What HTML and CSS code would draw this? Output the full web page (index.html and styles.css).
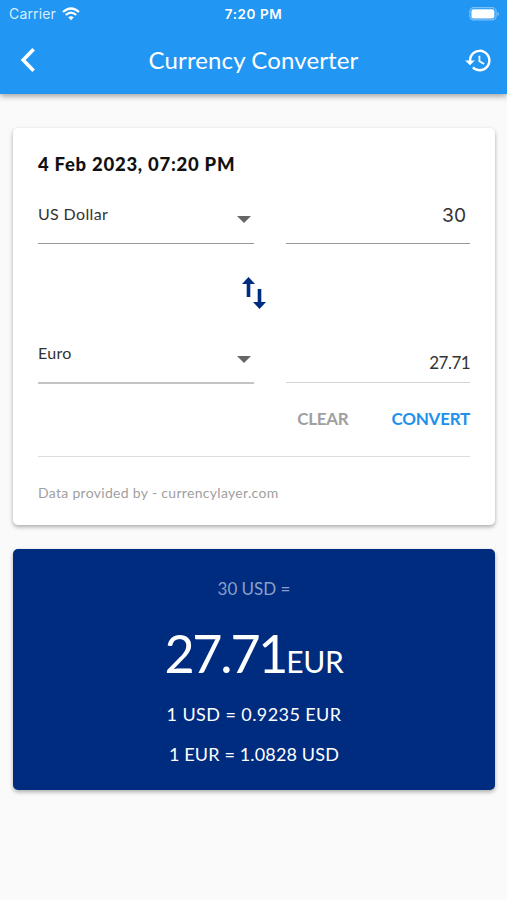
FILE: index.html
```html
<!DOCTYPE html>
<html lang="en">
<head>
<meta charset="utf-8">
<title>Currency Converter</title>
<link rel="stylesheet" href="styles.css">
</head>
<body>
<header class="header">
  <div class="status">
    <div class="carrier"><span>Carrier</span>
      <svg width="18" height="14" viewBox="0 0 18 14" fill="none" stroke="#fff" stroke-width="2.3"><path d="M1 5Q9-2 17 5M3.8 8Q9 3.2 14.2 8"/><path d="M6.2 10.3Q9 8.2 11.8 10.3L9 13.2Z" fill="#fff" stroke="none"/></svg>
    </div>
    <div class="clock">7:20 PM</div>
    <svg class="battery" width="31" height="14" viewBox="0 0 31 14"><rect x=".9" y=".7" width="26.2" height="12.2" rx="3.8" fill="none" stroke="#7dc1f9" stroke-width="1.2"/><rect x="2.4" y="2.2" width="23" height="9.2" rx="2.2" fill="#fff"/><path d="M28.5 5v4q1.6-.6 1.6-2t-1.6-2Z" fill="#7dc1f9"/></svg>
  </div>
  <div class="bar">
    <svg width="16" height="26" viewBox="0 0 16 26" fill="none" stroke="#fff" stroke-width="3.6"><path d="M13.6 2.2 3.2 13 13.6 23.8"/></svg>
    <h1 class="title">Currency Converter</h1>
    <svg width="29" height="29" viewBox="0 0 24 24" fill="#fff"><path d="M13 3a9 9 0 0 0-9 9H1l3.89 3.89.07.14L9 12H6a7 7 0 1 1 2.06 4.94l-1.42 1.42A9 9 0 1 0 13 3Zm-1 5v5l4.28 2.54.72-1.21-3.5-2.08V8H12Z"/></svg>
  </div>
</header>
<main class="content">
  <section class="card form">
    <h2 class="date">4 Feb 2023, 07:20 PM</h2>
    <div class="fields">
      <div class="select dark"><span class="dollar">US Dollar</span><i class="caret"></i></div>
      <div class="amount dark">30</div>
    </div>
    <div class="swap">
      <svg width="26" height="34" viewBox="0 0 26 34" fill="#002c80"><path d="M7.5 1 14 8H9.3V21H5.7V8H1ZM16.7 13h3.6V26H25L18.5 33 12 26h4.7Z"/></svg>
    </div>
    <div class="fields second">
      <div class="select"><span class="euro">Euro</span><i class="caret"></i></div>
      <div class="amount converted">27.71</div>
    </div>
    <div class="actions"><span class="clear">CLEAR</span><span class="convert">CONVERT</span></div>
    <p class="source">Data provided by - currencylayer.com</p>
  </section>
  <section class="card result">
    <p class="query">30 USD =</p>
    <p class="total"><span class="value">27.71</span><span class="unit">EUR</span></p>
    <p class="rate">1 USD = 0.9235 EUR</p>
    <p class="rate inverse">1 EUR = 1.0828 USD</p>
  </section>
</main>
</body>
</html>
```
FILE: styles.css
```css
* { box-sizing: border-box; }
body { margin: 0; min-height: 900px; background: #fafafa; color: #333; font-family: Lato, sans-serif; }
h1, h2, p { margin: 0; font-weight: 400; white-space: nowrap; }
svg { display: block; flex: none; }
.header { height: 94px; background: #2196f3; color: #fff; box-shadow: 0 2px 6px rgba(0,0,0,.38); }
.status { height: 28px; padding: 0 7px 0 9px; display: grid; grid-template-columns: 1fr auto 1fr; align-items: center; font: 14px/28px Inter, sans-serif; }
.carrier { display: flex; align-items: center; gap: 6px; color: #d7efff; letter-spacing: .15px; }
.clock { font-weight: 600; font-size: 13.5px; letter-spacing: .55px; margin-right: 2px; }
.battery { justify-self: end; }
.bar { height: 64px; padding: 0 14px 0 20px; display: grid; grid-template-columns: 1fr auto 1fr; align-items: center; }
.bar svg:last-child { justify-self: end; }
.title { font-size: 24px; line-height: 30px; letter-spacing: .12px; margin-right: 6px; }
.content { padding: 34px 12px 0 13px; }
.card { border-radius: 5px; box-shadow: 0 2px 4px rgba(0,0,0,.32); }
.form { height: 397px; padding: 24px 25px 0; background: #fff; }
.date { font-size: 18.5px; line-height: 24px; font-weight: 900; letter-spacing: .73px; color: #111; }
.fields { display: grid; grid-template-columns: 216px 1fr; column-gap: 32px; height: 68px; }
.select { display: flex; justify-content: space-between; border-bottom: 2px solid #c4c4c4; padding: 26px 2px 0 0; font-size: 16px; line-height: 24px; letter-spacing: .35px; }
.caret { width: 14px; height: 7px; margin: 14px 1px 0 0; background: #666; clip-path: polygon(0 0, 100% 0, 50% 100%); }
.amount { border-bottom: 1px solid #d5d5d5; text-align: right; padding: 26px 4px 0 0; font-family: Inter, sans-serif; font-size: 19.2px; line-height: 26px; }
.dark { border-bottom: 1px solid #999; }
.swap { height: 98px; padding-top: 32px; display: flex; justify-content: center; }
.second { height: 42px; }
.second .select { padding-top: 0; }
.second .caret { margin-top: 14px; }
.euro { margin-top: -1px; }
.second .amount { padding: 8px 0 0; height: 41px; font: 17px/26px Lato, sans-serif; letter-spacing: -.55px; }
.actions { height: 73px; display: flex; justify-content: flex-end; gap: 43px; border-bottom: 1px solid #ddd; padding-top: 23px; font-size: 17px; line-height: 24px; font-weight: 700; letter-spacing: -.25px; }
.clear { color: #a0a0a0; }
.convert { color: #2190ed; }
.source { padding-top: 26px; font-size: 14px; line-height: 20px; letter-spacing: .31px; color: #a0a0a0; }
.result { height: 241px; margin-top: 24px; padding-top: 28px; background: #002c80; color: #fff; text-align: center; }
.query { font-size: 17px; line-height: 24px; color: #8b9fc8; }
.total { height: 72px; margin-top: 16px; display: flex; justify-content: center; align-items: baseline; line-height: 72px; }
.value { font-size: 52px; letter-spacing: -2.2px; }
.unit { font-size: 30px; letter-spacing: -.3px; }
.rate { margin-top: 13px; font-size: 18px; line-height: 24px; letter-spacing: .42px; }
.inverse { margin-top: 16px; letter-spacing: .15px; }
```
